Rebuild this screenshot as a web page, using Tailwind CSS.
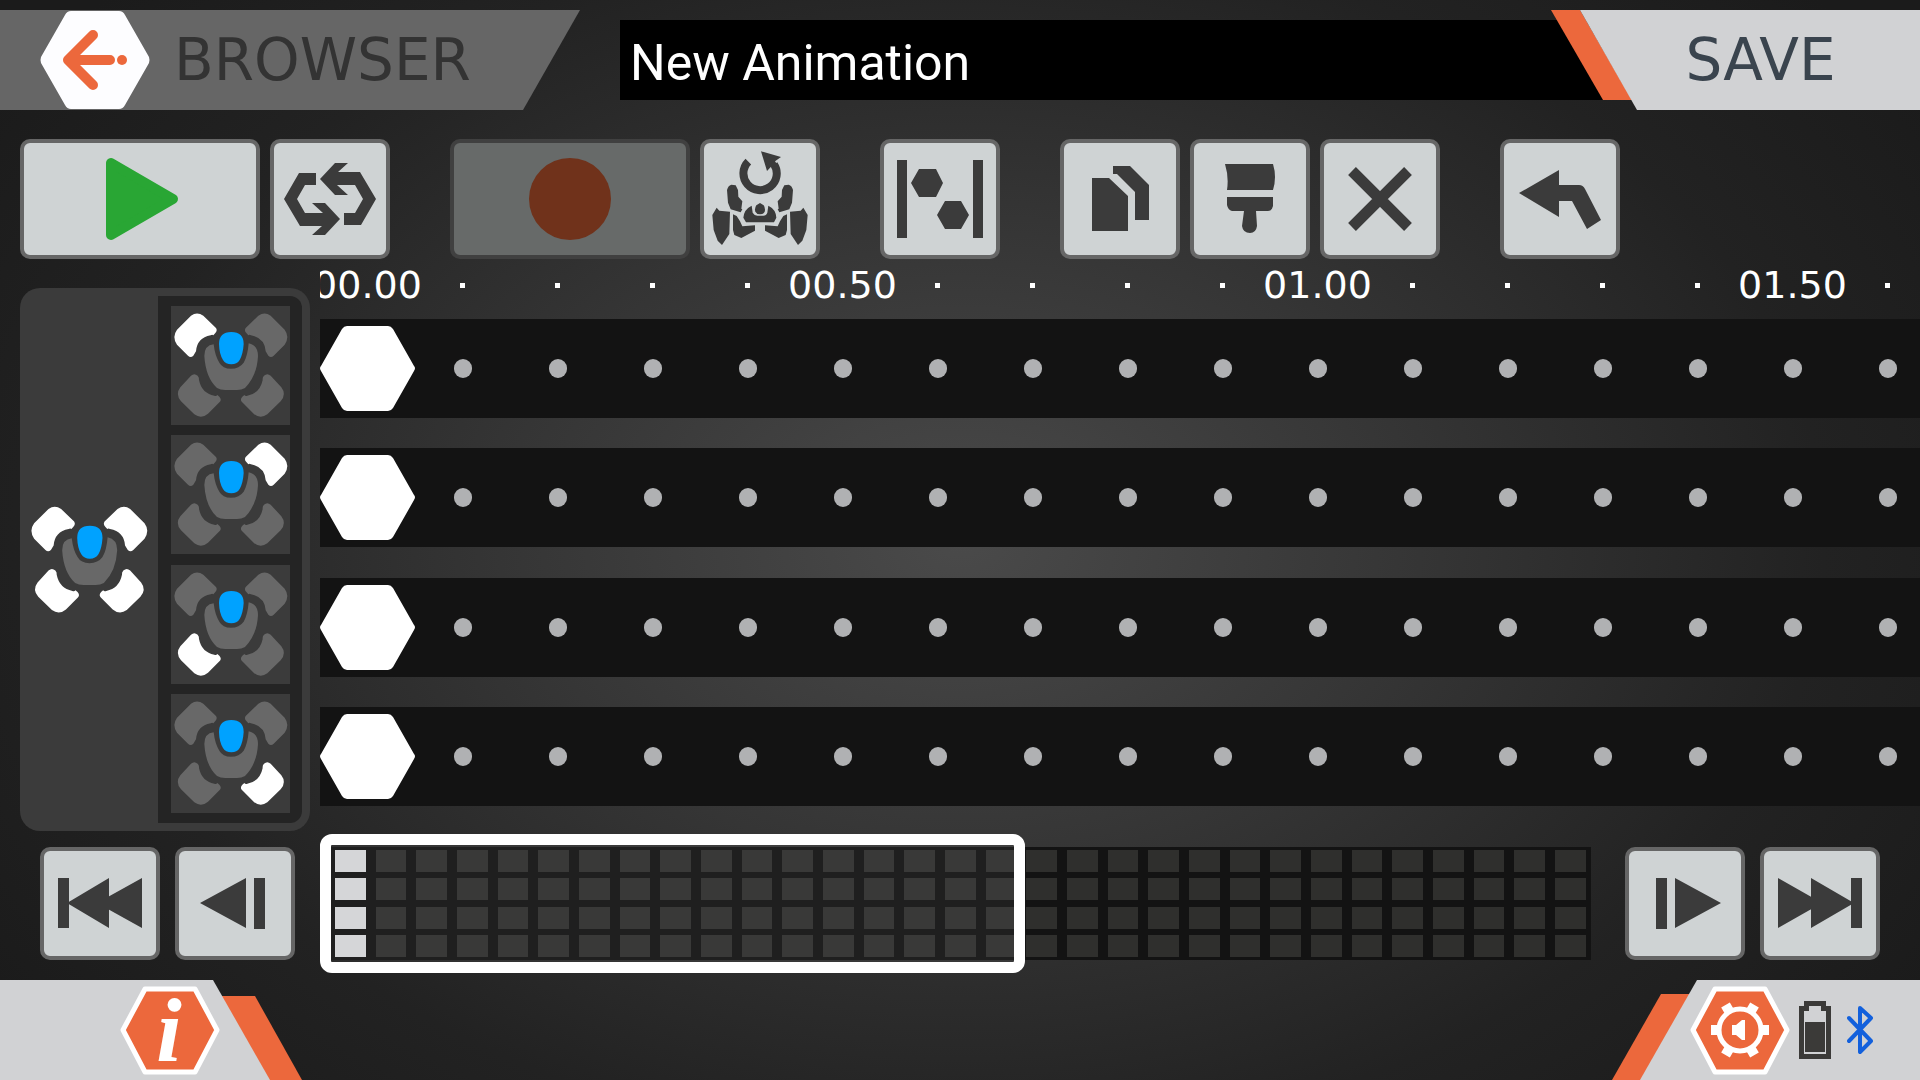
<!DOCTYPE html>
<html lang="en">
<head>
  <meta charset="UTF-8" />
  <meta name="viewport" content="width=device-width, initial-scale=1.0"/>
  <title>Animation Editor</title>
  <script src="https://cdn.jsdelivr.net/npm/@tailwindcss/browser@4"></script>
</head>
<body class="min-h-screen flex flex-col overflow-x-hidden bg-[#1b1b1b] bg-[radial-gradient(ellipse_60%_75%_at_50%_50%,#4a4a4a_0%,#353535_40%,#222222_75%,#1b1b1b_100%)] font-['DejaVu_Sans',sans-serif] text-white">

  <!-- shared shapes -->
  <svg class="hidden" aria-hidden="true">
    <symbol id="legTop" viewBox="0 0 357 357" overflow="visible">
      <path d="M60 29Q78 16 97 29L135 66Q140 74 133 81L127 88Q124 84 119 88Q78 96 75 136L67 149Q59 157 51 149L18 116Q2 93 18 71Z"/>
    </symbol>
    <symbol id="legBottom" viewBox="0 0 357 357" overflow="visible">
      <path d="M60 209Q70 200 80 209Q85 214 84 222Q92 262 130 269Q136 271 139 267L145 272Q153 281 146 288L111 323Q91 340 70 325L30 286Q12 265 28 244Z"/>
    </symbol>
    <symbol id="torso" viewBox="0 0 357 357" overflow="visible">
      <path fill="#686868" d="M128 115Q100 118 100 150Q104 215 138 246Q148 252 163 252H198Q212 252 222 246Q258 210 261 150Q261 118 233 112Q230 150 218 170Q205 188 180 188Q155 188 145 170Q132 150 128 115Z"/>
      <path fill="#00a2ff" d="M181 78Q218 78 218 114Q216 145 206 162Q198 175 181 175Q164 175 156 162Q145 145 144 114Q144 78 181 78Z"/>
    </symbol>
  </svg>

  <header class="flex items-start pt-[10px]">
    <a href="#browser" class="relative flex items-center w-[580px] h-[100px] pl-10 gap-6 bg-[#666666] [clip-path:polygon(0_0,100%_0,523px_100%,0_100%)]">
      <svg class="w-[110px] h-[98px]" viewBox="0 0 110 98" aria-hidden="true">
        <path fill="#fdfdff" d="M31 0H79Q83 0 85 4L109 46Q110 49 109 52L85 94Q83 98 79 98H31Q27 98 25 94L1 52Q0 49 1 46L25 4Q27 0 31 0Z"/>
        <path d="M53 24L28 49L53 74M29 49H70" fill="none" stroke="#ec683c" stroke-width="10" stroke-linecap="round" stroke-linejoin="round"/>
        <circle cx="82" cy="49" r="5" fill="#ec683c"/>
      </svg>
      <span class="text-[58px] leading-none text-[#333333]">BROWSER</span>
    </a>
    <div class="flex flex-1 items-start pl-10">
      <input type="text" aria-label="Animation name" value="New Animation" class="min-w-0 flex-1 h-20 mt-[10px] pl-[10px] pt-[6px] bg-black font-['Roboto',sans-serif] text-[50px] leading-none text-white outline-none"/>
      <div class="-ml-[52px] flex w-[369px] h-[100px]">
        <button type="button" class="relative w-full h-full text-[58px] leading-none text-[#3a444e] cursor-pointer">
          <svg class="absolute inset-0 w-full h-full" viewBox="0 0 369 100" preserveAspectRatio="none" aria-hidden="true">
            <path fill="#ec683c" d="M0 0H29L81 90H52Z"/>
            <path fill="#d1d2d4" d="M29 0H369V100H86Z"/>
          </svg>
          <span class="relative pl-[50px]">SAVE</span>
        </button>
      </div>
    </div>
  </header>

  <div class="flex gap-[60px] mt-[29px] pl-5">
    <div class="flex gap-[10px]">
      <button type="button" aria-label="Play" class="w-60 h-30 rounded-[10px] border-4 border-[#666666] bg-[#cfd3d4]">
        <svg class="w-full h-full" viewBox="4 4 232 112"><path d="M91 24V96L153 60Z" fill="#29a634" stroke="#29a634" stroke-width="10" stroke-linejoin="round"/></svg>
      </button>
      <button type="button" aria-label="Loop" class="size-30 rounded-[10px] border-4 border-[#666666] bg-[#cfd3d4]">
        <svg class="w-full h-full" viewBox="4 4 112 112" fill="#3b3b3b">
          <path id="loopHalf" d="M29 34H46V46H35L27 60L35 74H53L42 64H55L70 80L55 96H42L52 87H30L14 60Z"/>
          <use href="#loopHalf" transform="rotate(180 60 60)"/>
        </svg>
      </button>
    </div>
    <div class="flex gap-[10px]">
      <button type="button" aria-label="Record" disabled class="w-60 h-30 rounded-[10px] border-4 border-[#404040] bg-[#676a69]">
        <svg class="w-full h-full" viewBox="4 4 232 112"><circle cx="120" cy="60" r="41" fill="#70321b"/></svg>
      </button>
      <button type="button" aria-label="Reset pose" class="size-30 rounded-[10px] border-4 border-[#666666] bg-[#cfd3d4]">
        <svg class="w-full h-full" viewBox="12 39 336 336" fill="#3b3b3b">
          <path d="M145 95A50 50 0 1 0 222 103" fill="none" stroke="#3b3b3b" stroke-width="24"/>
          <path d="M183 64L243 81L225 94L236 110L213 110L201 123Z"/>
          <g id="robotSide">
            <path d="M94 164L107 166L114 180L115 200L127 214L124 236L127 238L122 247L92 238L84 218L81 180Q84 167 94 164Z"/>
            <path d="M50 233L58 242L90 245L88 312L66 345L53 332L41 300L37 255Z"/>
            <path d="M99 253L110 258L120 274L127 289L165 286V302L124 324L103 315L99 300Z"/>
          </g>
          <use href="#robotSide" transform="matrix(-1 0 0 1 360 0)"/>
          <path d="M155 227L158 248Q163 257 172 257H190Q199 257 202 248L205 227Q228 238 229 263L222 277H138L130 263Q132 238 155 227Z"/>
          <path d="M180 219L191 226Q197 235 194 245Q190 253 180 253Q170 253 166 245Q163 235 169 226Z"/>
        </svg>
      </button>
    </div>
    <button type="button" aria-label="Space keyframes" class="size-30 rounded-[10px] border-4 border-[#666666] bg-[#cfd3d4]">
      <svg class="w-full h-full" viewBox="4 4 112 112" fill="#3b3b3b"><path d="M17 21H27V99H17ZM93 21H103V99H93ZM39 30H56L63 44L56 58H39L31 44ZM65 62H81L89 76L81 90H65L57 76Z"/></svg>
    </button>
    <div class="flex gap-[10px]">
      <button type="button" aria-label="Copy" class="size-30 rounded-[10px] border-4 border-[#666666] bg-[#cfd3d4]">
        <svg class="w-full h-full" viewBox="4 4 112 112" fill="#3b3b3b"><path d="M32 39H49L68 57V92H32ZM53 27H70L89 46V81H75V53L57 35H53Z"/></svg>
      </button>
      <button type="button" aria-label="Paste" class="size-30 rounded-[10px] border-4 border-[#666666] bg-[#cfd3d4]">
        <svg class="w-full h-full" viewBox="4 4 112 112" fill="#3b3b3b"><path d="M35 25H83Q87 38 83 51H37Q39 38 35 25ZM37 58H83V67Q82 72 78 72H66L67 87Q66 94 60 94Q53 94 52 87L54 72H42Q38 71 37 66Z"/></svg>
      </button>
      <button type="button" aria-label="Delete" class="size-30 rounded-[10px] border-4 border-[#666666] bg-[#cfd3d4]">
        <svg class="w-full h-full" viewBox="4 4 112 112"><path d="M32 32L88 88M88 32L32 88" stroke="#3b3b3b" stroke-width="11"/></svg>
      </button>
    </div>
    <button type="button" aria-label="Undo" class="size-30 rounded-[10px] border-4 border-[#666666] bg-[#cfd3d4]">
      <svg class="w-full h-full" viewBox="4 4 112 112" fill="#3b3b3b"><path d="M19 54L59 31V46H79Q83 46 85 50L101 81L87 90L72 62H59V78Z"/></svg>
    </button>
  </div>

  <main class="flex gap-[10px] pl-5">
    <div class="flex w-[290px] h-[543px] mt-[29px] py-2 pr-2 rounded-[20px] bg-[#3b3b3b]">
      <button type="button" aria-label="All legs" class="flex-1 flex items-center justify-center">
        <svg class="size-[122px]" viewBox="0 0 357 357" fill="#ffffff">
          <use href="#legTop"/><use href="#legTop" transform="matrix(-1 0 0 1 359 0)"/>
          <use href="#legBottom"/><use href="#legBottom" transform="matrix(-1 0 0 1 359 0)"/>
          <use href="#torso"/>
        </svg>
      </button>
      <div id="legs" class="flex flex-col justify-between w-36 py-[10px] pl-[13px] pr-3 rounded-r-xl bg-[#242424]"></div>
    </div>
    <div class="flex-1 min-w-0 flex flex-col overflow-hidden pb-[25px]">
      <div id="ruler" class="flex h-[60px] pb-2 text-[38px] leading-none"></div>
      <div id="tracks" class="flex-1 flex flex-col justify-between"></div>
    </div>
  </main>

  <div class="flex justify-between mt-4 pl-10 pr-10">
    <div class="flex gap-[15px]">
      <button type="button" aria-label="First frame" class="w-30 h-[113px] rounded-[10px] border-4 border-[#666666] bg-[#cfd3d4]">
        <svg class="w-full h-full" viewBox="4 4 112 105" fill="#3b3b3b"><path d="M18 31H29V81H18ZM27 56L69 31V81ZM57 56L102 31V81Z"/></svg>
      </button>
      <button type="button" aria-label="Previous frame" class="w-30 h-[113px] rounded-[10px] border-4 border-[#666666] bg-[#cfd3d4]">
        <svg class="w-full h-full" viewBox="4 4 112 105" fill="#3b3b3b"><path d="M25 56L71 31V81ZM79 31H90V82H79Z"/></svg>
      </button>
    </div>
    <div class="relative flex-1 ml-[35px] mr-[34px]">
      <div id="overview" class="flex h-full bg-[#131313]"></div>
      <div class="absolute -left-[10px] -top-[13px] -bottom-[13px] w-[705px] rounded-xl border-[11px] border-white bg-white/5"></div>
    </div>
    <div class="flex gap-[15px]">
      <button type="button" aria-label="Next frame" class="w-30 h-[113px] rounded-[10px] border-4 border-[#666666] bg-[#cfd3d4]">
        <svg class="w-full h-full" viewBox="4 4 112 105" fill="#3b3b3b"><path d="M31 31H42V82H31ZM50 31L96 56L50 81Z"/></svg>
      </button>
      <button type="button" aria-label="Last frame" class="w-30 h-[113px] rounded-[10px] border-4 border-[#666666] bg-[#cfd3d4]">
        <svg class="w-full h-full" viewBox="4 4 112 105" fill="#3b3b3b"><path d="M18 31L62 56L18 81ZM51 31L94 56L51 81ZM91 31H102V81H91Z"/></svg>
      </button>
    </div>
  </div>

  <footer class="flex justify-between mt-auto pt-5">
    <div class="relative w-[302px] h-[100px]">
      <svg class="absolute inset-0 w-full h-full" viewBox="0 0 302 100" aria-hidden="true">
        <path fill="#ec683c" d="M200 16H255L302 100H240Z"/>
        <path fill="#d1d2d4" d="M0 0H213L270 100H0Z"/>
      </svg>
      <button type="button" aria-label="Info" class="relative block ml-[120px] mt-[6px]">
        <svg class="w-[100px] h-[89px] overflow-visible" viewBox="0 0 100 89">
          <path fill="#ec683c" stroke="#ffffff" stroke-width="5" stroke-linejoin="round" d="M25 3H75L97 44L75 86H25L3 44Z"/>
          <text x="49" y="75" text-anchor="middle" font-family="Liberation Serif, serif" font-weight="700" font-style="italic" font-size="92" fill="#ffffff">i</text>
        </svg>
      </button>
    </div>
    <div class="relative flex items-start w-[308px] h-[100px] pl-[78px]">
      <svg class="absolute inset-0 w-full h-full" viewBox="0 0 308 100" aria-hidden="true">
        <path fill="#ec683c" d="M49 14H90L40 100H0Z"/>
        <path fill="#d1d2d4" d="M85 0H308V100H28Z"/>
      </svg>
      <button type="button" aria-label="Settings" class="relative block mt-[6px]">
        <svg class="w-[100px] h-[89px]" viewBox="0 0 100 89">
          <path fill="#ec683c" stroke="#ffffff" stroke-width="5" stroke-linejoin="round" d="M25 3H75L97 44L75 86H25L3 44Z"/>
          <g fill="#ffffff">
            <path id="tooth" d="M71 39L74 39H79V49H74L71 49Z"/>
            <use href="#tooth" transform="rotate(60 50 44)"/><use href="#tooth" transform="rotate(120 50 44)"/>
            <use href="#tooth" transform="rotate(180 50 44)"/><use href="#tooth" transform="rotate(240 50 44)"/>
            <use href="#tooth" transform="rotate(300 50 44)"/>
            <path d="M42 39H46L52 34H55V54H52L46 49H42Z"/>
          </g>
          <circle cx="50" cy="44" r="21" fill="none" stroke="#ffffff" stroke-width="5"/>
        </svg>
      </button>
      <svg class="relative w-8 h-[58px] mt-[21px] ml-[9px]" viewBox="0 0 32 58" role="img" aria-label="Battery">
        <path fill="none" stroke="#3b3a38" stroke-width="5" d="M7.500 2.500H24.500V7.500H29.500V55.500H2.500V7.500H7.500Z"/>
        <path fill="#3b3a38" d="M6 21H26V51H6Z"/>
      </svg>
      <svg class="relative w-[26px] h-[50px] mt-[25px] ml-4" viewBox="0 0 26 50" role="img" aria-label="Bluetooth">
        <path fill="none" stroke="#1260dc" stroke-width="4" stroke-linecap="round" stroke-linejoin="round" d="M2 13L24 36L13 47V3L24 13L2 36"/>
      </svg>
    </div>
  </footer>

  <script>
    const FRAMES = 17;
    const OVERVIEW_FRAMES = 31;
    const legNames = ['Front left leg', 'Front right leg', 'Back left leg', 'Back right leg'];
    const labels = { 0: '00.00', 5: '00.50', 10: '01.00', 15: '01.50' };

    document.getElementById('legs').innerHTML = legNames.map((name, i) => {
      const fill = (n) => (n === i ? '#ffffff' : '#686868');
      return `<button type="button" aria-label="${name}" class="w-full h-[119px] bg-[#3b3b3b]">
        <svg class="w-full h-full" viewBox="0 0 357 357">
          <use href="#legTop" fill="${fill(0)}"/>
          <use href="#legTop" fill="${fill(1)}" transform="matrix(-1 0 0 1 359 0)"/>
          <use href="#legBottom" fill="${fill(2)}"/>
          <use href="#legBottom" fill="${fill(3)}" transform="matrix(-1 0 0 1 359 0)"/>
          <use href="#torso"/>
        </svg>
      </button>`;
    }).join('');

    let ruler = '';
    for (let f = 0; f < FRAMES; f++) {
      ruler += '<div class="w-[95px] shrink-0 flex items-center justify-center">' +
        (labels[f] ? `<span>${labels[f]}</span>` : '<span class="size-[5px] bg-white"></span>') + '</div>';
    }
    document.getElementById('ruler').innerHTML = ruler;

    let track = '<button type="button" aria-label="Keyframe" class="w-[95px] shrink-0">' +
      '<svg class="w-[95px] h-[85px]" viewBox="0 0 95 85"><path fill="#ffffff" d="M27 0H68Q71 0 73 3L94 40Q96 42 94 45L73 82Q71 85 68 85H27Q24 85 22 82L1 45Q-1 42 1 40L22 3Q24 0 27 0Z"/></svg></button>';
    for (let f = 1; f < FRAMES; f++) {
      track += '<div class="w-[95px] shrink-0 flex justify-center"><span class="w-[18px] h-[19px] rounded-full bg-[#b0b1b3]"></span></div>';
    }
    document.getElementById('tracks').innerHTML = legNames
      .map(() => `<div class="flex items-center h-[99px] bg-[#131313]">${track}</div>`).join('');

    let cells = '';
    for (let f = 0; f < OVERVIEW_FRAMES; f++) {
      const cell = f === 0
        ? '<span class="h-[22px] bg-[#d3d4d6]"></span>'
        : '<span class="h-[22px] bg-[#2f2f2d]"></span>';
      cells += `<div class="flex-1 flex flex-col justify-between px-[5px] py-[3px]">${cell.repeat(4)}</div>`;
    }
    document.getElementById('overview').innerHTML = cells;
  </script>

</body>
</html>
